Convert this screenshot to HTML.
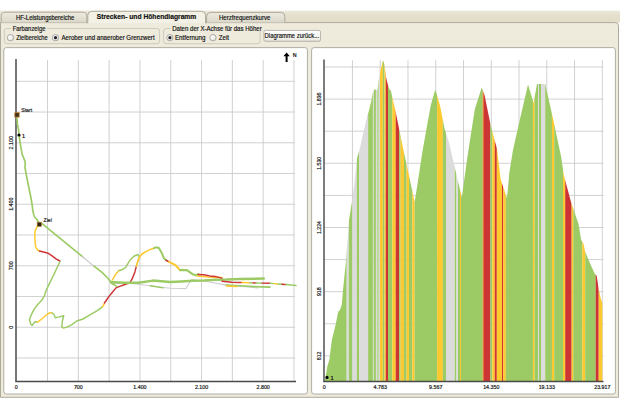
<!DOCTYPE html>
<html><head><meta charset="utf-8"><title>Strecken- und Höhendiagramm</title>
<style>html,body{margin:0;padding:0;background:#ffffff;}body{width:620px;height:413px;overflow:hidden;}svg{display:block;}</style>
</head><body>
<svg width="620" height="413" viewBox="0 0 620 413">
<rect x="0" y="0" width="620" height="413" fill="#ffffff"/>
<linearGradient id="stripg" x1="0" y1="0" x2="0" y2="1"><stop offset="0" stop-color="#ece9dc"/><stop offset="0.3" stop-color="#e6e1cf"/><stop offset="1" stop-color="#e1dbc7"/></linearGradient><rect x="0" y="10.6" width="620" height="12" fill="url(#stripg)"/>
<path d="M0.5,22.6 H615.5 Q618.5,22.6 618.5,25.6 V397.3 H0.5 Z" fill="#eeebdd" stroke="#aeaa9b" stroke-width="1"/>
<defs><linearGradient id="tabg" x1="0" y1="0" x2="0" y2="1"><stop offset="0" stop-color="#eceae0"/><stop offset="1" stop-color="#dbd8c9"/></linearGradient><linearGradient id="btng" x1="0" y1="0" x2="0" y2="1"><stop offset="0" stop-color="#ffffff"/><stop offset="0.8" stop-color="#f0efe8"/><stop offset="1" stop-color="#dedbd0"/></linearGradient><radialGradient id="radg" cx="0.35" cy="0.35" r="0.8"><stop offset="0" stop-color="#ffffff"/><stop offset="1" stop-color="#dcdcd4"/></radialGradient></defs>
<path d="M1.2,22.6 V16.2 Q1.2,12.2 5.2,12.2 H82.8 Q86.8,12.2 86.8,16.2 V22.6" fill="url(#tabg)" stroke="#aeaa9b" stroke-width="1"/>
<path d="M206.6,22.6 V16.4 Q206.6,12.4 210.6,12.4 H280.8 Q284.8,12.4 284.8,16.4 V22.6" fill="url(#tabg)" stroke="#aeaa9b" stroke-width="1"/>
<path d="M87.8,23.3 V15.3 Q87.8,11.3 91.8,11.3 H201.6 Q205.6,11.3 205.6,15.3 V23.3" fill="#f3f1e6" stroke="#aeaa9b" stroke-width="1"/>
<rect x="88.4" y="22" width="116.6" height="1.4" fill="#f3f1e6"/>
<text x="15.9" y="19.8" font-size="6.7" font-family="Liberation Sans, sans-serif" fill="#111" stroke="#111" stroke-width="0.17" textLength="58.5" lengthAdjust="spacingAndGlyphs">HF-Leistungsbereiche</text>
<text x="96.8" y="18.8" font-size="6.3" font-weight="bold" font-family="Liberation Sans, sans-serif" fill="#111" stroke="#111" stroke-width="0.17" textLength="99.5" lengthAdjust="spacingAndGlyphs">Strecken- und Höhendiagramm</text>
<text x="218.9" y="19.8" font-size="6.7" font-family="Liberation Sans, sans-serif" fill="#111" stroke="#111" stroke-width="0.17" textLength="51.5" lengthAdjust="spacingAndGlyphs">Herzfrequenzkurve</text>
<rect x="4.3" y="28.5" width="155.3" height="15.2" rx="2.5" fill="none" stroke="#cdcbbb" stroke-width="1"/>
<rect x="11" y="26" width="36" height="5" fill="#eeebdd"/>
<text x="12.7" y="30.9" font-size="6.7" font-family="Liberation Sans, sans-serif" fill="#111" stroke="#111" stroke-width="0.17" textLength="32.8" lengthAdjust="spacingAndGlyphs">Farbanzeige</text>
<rect x="163.6" y="28.5" width="96.5" height="15.2" rx="2.5" fill="none" stroke="#cdcbbb" stroke-width="1"/>
<rect x="170.5" y="26" width="93" height="5" fill="#eeebdd"/>
<text x="172.2" y="30.9" font-size="6.7" font-family="Liberation Sans, sans-serif" fill="#111" stroke="#111" stroke-width="0.17" textLength="89.5" lengthAdjust="spacingAndGlyphs">Daten der X-Achse für das Höher</text>
<circle cx="10.5" cy="37.7" r="3.2" fill="url(#radg)" stroke="#9a9a94" stroke-width="0.8"/>
<circle cx="55.5" cy="37.7" r="3.2" fill="url(#radg)" stroke="#9a9a94" stroke-width="0.8"/><circle cx="55.5" cy="37.7" r="1.6" fill="#222230"/>
<circle cx="169.9" cy="37.7" r="3.2" fill="url(#radg)" stroke="#9a9a94" stroke-width="0.8"/><circle cx="169.9" cy="37.7" r="1.6" fill="#222230"/>
<circle cx="213" cy="37.7" r="3.2" fill="url(#radg)" stroke="#9a9a94" stroke-width="0.8"/>
<text x="16.3" y="39.6" font-size="6.7" font-family="Liberation Sans, sans-serif" fill="#111" stroke="#111" stroke-width="0.17" textLength="31.5" lengthAdjust="spacingAndGlyphs">Zielbereiche</text>
<text x="61.4" y="39.6" font-size="6.7" font-family="Liberation Sans, sans-serif" fill="#111" stroke="#111" stroke-width="0.17" textLength="93.2" lengthAdjust="spacingAndGlyphs">Aerober und anaerober Grenzwert</text>
<text x="174.9" y="39.6" font-size="6.7" font-family="Liberation Sans, sans-serif" fill="#111" stroke="#111" stroke-width="0.17" textLength="30.6" lengthAdjust="spacingAndGlyphs">Entfernung</text>
<text x="218.8" y="39.6" font-size="6.7" font-family="Liberation Sans, sans-serif" fill="#111" stroke="#111" stroke-width="0.17" textLength="10.2" lengthAdjust="spacingAndGlyphs">Zeit</text>
<rect x="263.9" y="30.4" width="56.6" height="10.9" rx="1.6" fill="url(#btng)" stroke="#a9a8a0" stroke-width="0.8"/>
<text x="264.6" y="37.9" font-size="6.7" font-family="Liberation Sans, sans-serif" fill="#111" stroke="#111" stroke-width="0.17" textLength="54.5" lengthAdjust="spacingAndGlyphs">Diagramme zurück...</text>
<rect x="3.8" y="47.6" width="303.6" height="346.4" rx="2.5" fill="#fff" stroke="#a7a69d" stroke-width="0.9"/>
<rect x="311.6" y="47.6" width="303.8" height="346.4" rx="2.5" fill="#fff" stroke="#a7a69d" stroke-width="0.9"/>
<line x1="47.51" y1="60" x2="47.51" y2="381.5" stroke="#c9c9c9" stroke-width="0.85"/>
<line x1="78.32" y1="60" x2="78.32" y2="381.5" stroke="#c9c9c9" stroke-width="0.85"/>
<line x1="109.13" y1="60" x2="109.13" y2="381.5" stroke="#c9c9c9" stroke-width="0.85"/>
<line x1="139.94" y1="60" x2="139.94" y2="381.5" stroke="#c9c9c9" stroke-width="0.85"/>
<line x1="170.75" y1="60" x2="170.75" y2="381.5" stroke="#c9c9c9" stroke-width="0.85"/>
<line x1="201.56" y1="60" x2="201.56" y2="381.5" stroke="#c9c9c9" stroke-width="0.85"/>
<line x1="232.37" y1="60" x2="232.37" y2="381.5" stroke="#c9c9c9" stroke-width="0.85"/>
<line x1="263.18" y1="60" x2="263.18" y2="381.5" stroke="#c9c9c9" stroke-width="0.85"/>
<line x1="293.99" y1="60" x2="293.99" y2="381.5" stroke="#c9c9c9" stroke-width="0.85"/>
<line x1="16.0" y1="81.30" x2="295.0" y2="81.30" stroke="#c9c9c9" stroke-width="0.85"/>
<line x1="16.0" y1="112.04" x2="295.0" y2="112.04" stroke="#c9c9c9" stroke-width="0.85"/>
<line x1="16.0" y1="142.78" x2="295.0" y2="142.78" stroke="#c9c9c9" stroke-width="0.85"/>
<line x1="16.0" y1="173.52" x2="295.0" y2="173.52" stroke="#c9c9c9" stroke-width="0.85"/>
<line x1="16.0" y1="204.26" x2="295.0" y2="204.26" stroke="#c9c9c9" stroke-width="0.85"/>
<line x1="16.0" y1="235.00" x2="295.0" y2="235.00" stroke="#c9c9c9" stroke-width="0.85"/>
<line x1="16.0" y1="265.74" x2="295.0" y2="265.74" stroke="#c9c9c9" stroke-width="0.85"/>
<line x1="16.0" y1="296.48" x2="295.0" y2="296.48" stroke="#c9c9c9" stroke-width="0.85"/>
<line x1="16.0" y1="327.22" x2="295.0" y2="327.22" stroke="#c9c9c9" stroke-width="0.85"/>
<line x1="16.0" y1="357.96" x2="295.0" y2="357.96" stroke="#c9c9c9" stroke-width="0.85"/>
<line x1="16.0" y1="59.0" x2="16.0" y2="381.5" stroke="#4a4a4a" stroke-width="1.5"/>
<line x1="15.3" y1="381.5" x2="296.0" y2="381.5" stroke="#4a4a4a" stroke-width="1.5"/>
<text x="16.20" y="389.0" font-size="5.3" text-anchor="middle" font-family="Liberation Sans, sans-serif" fill="#222" stroke="#222" stroke-width="0.2">0</text>
<text x="78.32" y="389.0" font-size="5.3" text-anchor="middle" font-family="Liberation Sans, sans-serif" fill="#222" stroke="#222" stroke-width="0.2">700</text>
<text x="139.94" y="389.0" font-size="5.3" text-anchor="middle" font-family="Liberation Sans, sans-serif" fill="#222" stroke="#222" stroke-width="0.2">1.400</text>
<text x="201.56" y="389.0" font-size="5.3" text-anchor="middle" font-family="Liberation Sans, sans-serif" fill="#222" stroke="#222" stroke-width="0.2">2.100</text>
<text x="263.18" y="389.0" font-size="5.3" text-anchor="middle" font-family="Liberation Sans, sans-serif" fill="#222" stroke="#222" stroke-width="0.2">2.800</text>
<text transform="translate(12.6,327.20) rotate(-90)" x="0" y="0" font-size="5.3" text-anchor="middle" font-family="Liberation Sans, sans-serif" fill="#222" stroke="#222" stroke-width="0.2">0</text>
<text transform="translate(12.6,265.72) rotate(-90)" x="0" y="0" font-size="5.3" text-anchor="middle" font-family="Liberation Sans, sans-serif" fill="#222" stroke="#222" stroke-width="0.2">700</text>
<text transform="translate(12.6,204.24) rotate(-90)" x="0" y="0" font-size="5.3" text-anchor="middle" font-family="Liberation Sans, sans-serif" fill="#222" stroke="#222" stroke-width="0.2">1.400</text>
<text transform="translate(12.6,142.76) rotate(-90)" x="0" y="0" font-size="5.3" text-anchor="middle" font-family="Liberation Sans, sans-serif" fill="#222" stroke="#222" stroke-width="0.2">2.100</text>
<polyline points="17,118 17.4,123.9 18.5,129.7 19.2,135.5 19.9,141.3 21.1,148.6 22.2,154.4 24,158.8 25.2,162 25,167.5 26.3,175 27.5,181 28.8,187.5 30.2,194 31.3,200 32.3,206 32.7,210 33.8,215 35,217.5 37,219.5 39.3,224" fill="none" stroke="#9ccb65" stroke-width="1.68" stroke-linejoin="round" stroke-linecap="round"/>
<polyline points="39,224 42.4,223.9 63.8,241.3 82.5,256.6" fill="none" stroke="#9ccb65" stroke-width="1.68" stroke-linejoin="round" stroke-linecap="round"/>
<polyline points="82.5,256.6 85,258.8 94,266.2" fill="none" stroke="#d0d0d0" stroke-width="1.46" stroke-linejoin="round" stroke-linecap="round"/>
<polyline points="94,266.2 95,266.9 102.3,272.7 108.1,278.5 111,282.1 113.9,284.3" fill="none" stroke="#9ccb65" stroke-width="1.68" stroke-linejoin="round" stroke-linecap="round"/>
<polyline points="39,224 37.6,225.8 35.1,230.7 34.7,235.5 35.1,241.3 35.7,247.1 37.6,250 39.5,251" fill="none" stroke="#fec92f" stroke-width="1.46" stroke-linejoin="round" stroke-linecap="round"/>
<polyline points="39.5,251 43.4,252 48.3,253.3 52.1,255.9 56,258.8 59.9,261" fill="none" stroke="#cd3434" stroke-width="1.46" stroke-linejoin="round" stroke-linecap="round"/>
<polyline points="59.9,261.7 54,274.3 48.3,285.9 46.3,290 44.4,295.8 41.8,300.3 37.9,304.2 34,309.4 30.8,315.8 29.5,319.7 30.8,324.2 32.1,325.5 34,322.9 35.3,321.6 37.3,322.3" fill="none" stroke="#9ccb65" stroke-width="1.46" stroke-linejoin="round" stroke-linecap="round"/>
<polyline points="37.3,322.3 41.8,319 46.9,314.5 50.2,312.6 52.1,313" fill="none" stroke="#fec92f" stroke-width="1.46" stroke-linejoin="round" stroke-linecap="round"/>
<polyline points="52.1,313 54,314.5 55.3,317.7 58.5,317.1 63.7,315.8 62.4,321 61.8,326.8 63.1,328.1 66.3,327.4 71.5,324.8 76.6,321 83.1,319 89.5,315.2 97.3,310.6 102.4,306.8" fill="none" stroke="#9ccb65" stroke-width="1.46" stroke-linejoin="round" stroke-linecap="round"/>
<polyline points="102.4,306.8 104.4,303.5" fill="none" stroke="#fec92f" stroke-width="1.46" stroke-linejoin="round" stroke-linecap="round"/>
<polyline points="104.4,303 106.6,300 108.8,296.6 112.4,292.2 116,287.9 119.7,286.4 125.5,284.3 129.8,282.8 132,279.2 134.9,271.9 136.4,266.1" fill="none" stroke="#cd3434" stroke-width="1.46" stroke-linejoin="round" stroke-linecap="round"/>
<polyline points="113.9,283.5 131.3,283.5 150.2,285.7 170,288.3 185.8,288.6 191.4,279.8 203.9,281 225.3,284.9 258,288" fill="none" stroke="#cfcfd4" stroke-width="1.12" stroke-linejoin="round" stroke-linecap="round"/>
<polyline points="111,282.1 124,282.8 138.5,282.8 153,280.6 170,282.1 181.3,281.5 192.6,280.7 203.9,280.4 215.1,279.8 226.4,279.6 240,278.9 263.8,278.6" fill="none" stroke="#9ccb65" stroke-width="2.46" stroke-linejoin="round" stroke-linecap="round"/>
<polyline points="111,283 116.8,286.4" fill="none" stroke="#9ccb65" stroke-width="1.68" stroke-linejoin="round" stroke-linecap="round"/>
<polyline points="150.2,285.7 163.2,287.9" fill="none" stroke="#9ccb65" stroke-width="1.46" stroke-linejoin="round" stroke-linecap="round"/>
<polyline points="112.4,279.9 115.3,274.8 119,270.5" fill="none" stroke="#fec92f" stroke-width="1.46" stroke-linejoin="round" stroke-linecap="round"/>
<polyline points="119,270.5 121.9,269.8 125.5,267.6 129.8,260.3 134.2,256 137.8,254.5 139.3,256.7 137.8,261.8 136.4,266.1" fill="none" stroke="#9ccb65" stroke-width="1.46" stroke-linejoin="round" stroke-linecap="round"/>
<polyline points="136.4,266.1 138.5,258.9 141.4,254.5 145.8,251.6 150.2,249.4 154,248.2" fill="none" stroke="#fec92f" stroke-width="1.57" stroke-linejoin="round" stroke-linecap="round"/>
<polyline points="154,248.2 156,247.3 158.9,248 161.8,253.1 163.9,258.1 166.1,260.3" fill="none" stroke="#9ccb65" stroke-width="2.02" stroke-linejoin="round" stroke-linecap="round"/>
<polyline points="166.1,260.3 169,261.8" fill="none" stroke="#cd3434" stroke-width="1.68" stroke-linejoin="round" stroke-linecap="round"/>
<polyline points="169,261.8 175.6,265.2 180.2,270.2" fill="none" stroke="#fec92f" stroke-width="2.02" stroke-linejoin="round" stroke-linecap="round"/>
<polyline points="180.2,270.2 186.9,270.2 192.6,274.2 196,275.3 198.2,274.2" fill="none" stroke="#9ccb65" stroke-width="2.24" stroke-linejoin="round" stroke-linecap="round"/>
<polyline points="197,275.9 209.5,276.9 221.9,277.6" fill="none" stroke="#fec92f" stroke-width="1.46" stroke-linejoin="round" stroke-linecap="round"/>
<polyline points="198.2,274.4 203.9,274.8 209.5,275.9 215.1,276.4 219.7,277.6 221.9,278.1" fill="none" stroke="#cd3434" stroke-width="1.46" stroke-linejoin="round" stroke-linecap="round"/>
<polyline points="222,281.2 232,282.3 240,282.5 242,282.55882352941177" fill="none" stroke="#cd3434" stroke-width="1.46" stroke-linejoin="round" stroke-linecap="round"/>
<polyline points="242,282.55882352941177 250,282.79411764705884" fill="none" stroke="#fec92f" stroke-width="1.46" stroke-linejoin="round" stroke-linecap="round"/>
<polyline points="250,282.79411764705884 253,282.88235294117646" fill="none" stroke="#9ccb65" stroke-width="1.46" stroke-linejoin="round" stroke-linecap="round"/>
<polyline points="253,282.88235294117646 256,282.97058823529414" fill="none" stroke="#cd3434" stroke-width="1.46" stroke-linejoin="round" stroke-linecap="round"/>
<polyline points="256,282.97058823529414 257,283.0 262,283.11538461538464" fill="none" stroke="#9ccb65" stroke-width="1.46" stroke-linejoin="round" stroke-linecap="round"/>
<polyline points="262,283.11538461538464 270,283.3" fill="none" stroke="#cd3434" stroke-width="1.46" stroke-linejoin="round" stroke-linecap="round"/>
<polyline points="270,283.3 274,283.62" fill="none" stroke="#9ccb65" stroke-width="1.46" stroke-linejoin="round" stroke-linecap="round"/>
<polyline points="274,283.62 278,283.94" fill="none" stroke="#fec92f" stroke-width="1.46" stroke-linejoin="round" stroke-linecap="round"/>
<polyline points="278,283.94 282,284.26" fill="none" stroke="#9ccb65" stroke-width="1.46" stroke-linejoin="round" stroke-linecap="round"/>
<polyline points="282,284.26 285,284.5 286,284.6" fill="none" stroke="#cd3434" stroke-width="1.46" stroke-linejoin="round" stroke-linecap="round"/>
<polyline points="286,284.6 296,285.6" fill="none" stroke="#9ccb65" stroke-width="1.46" stroke-linejoin="round" stroke-linecap="round"/>
<polyline points="226,285.1 240,285.8 255,286.6 270,287.1" fill="none" stroke="#9ccb65" stroke-width="1.57" stroke-linejoin="round" stroke-linecap="round"/>
<polyline points="226.4,286.0 237,286.5" fill="none" stroke="#fec92f" stroke-width="1.46" stroke-linejoin="round" stroke-linecap="round"/>
<rect x="14.8" y="112.7" width="4.4" height="4.4" fill="#3a3020" stroke="#c9822a" stroke-width="0.8"/>
<rect x="37.2" y="222.2" width="4.2" height="4.2" fill="#2a2418" stroke="#b8802a" stroke-width="0.7"/>
<circle cx="19" cy="135" r="1.6" fill="#000"/>
<text x="21.2" y="112.3" font-size="5.8" font-family="Liberation Sans, sans-serif" fill="#111" stroke="#111" stroke-width="0.18" textLength="11" lengthAdjust="spacingAndGlyphs">Start</text>
<text x="43.6" y="222" font-size="6.2" font-family="Liberation Sans, sans-serif" fill="#111" stroke="#111" stroke-width="0.18" textLength="8.2" lengthAdjust="spacingAndGlyphs">Ziel</text>
<text x="22.1" y="137.8" font-size="5.6" font-family="Liberation Sans, sans-serif" fill="#111" stroke="#111" stroke-width="0.2">1</text>
<path d="M286.6,52.4 L289.8,56.2 H287.6 V62 H285.6 V56.2 H283.4 Z" fill="#000"/>
<text x="292.8" y="57" font-size="5.4" font-weight="bold" font-family="Liberation Sans, sans-serif" fill="#111">N</text>
<line x1="352.46" y1="60.3" x2="352.46" y2="381.5" stroke="#c9c9c9" stroke-width="0.85"/>
<line x1="380.22" y1="60.3" x2="380.22" y2="381.5" stroke="#c9c9c9" stroke-width="0.85"/>
<line x1="407.98" y1="60.3" x2="407.98" y2="381.5" stroke="#c9c9c9" stroke-width="0.85"/>
<line x1="435.74" y1="60.3" x2="435.74" y2="381.5" stroke="#c9c9c9" stroke-width="0.85"/>
<line x1="463.50" y1="60.3" x2="463.50" y2="381.5" stroke="#c9c9c9" stroke-width="0.85"/>
<line x1="491.26" y1="60.3" x2="491.26" y2="381.5" stroke="#c9c9c9" stroke-width="0.85"/>
<line x1="519.02" y1="60.3" x2="519.02" y2="381.5" stroke="#c9c9c9" stroke-width="0.85"/>
<line x1="546.78" y1="60.3" x2="546.78" y2="381.5" stroke="#c9c9c9" stroke-width="0.85"/>
<line x1="574.54" y1="60.3" x2="574.54" y2="381.5" stroke="#c9c9c9" stroke-width="0.85"/>
<line x1="602.30" y1="60.3" x2="602.30" y2="381.5" stroke="#c9c9c9" stroke-width="0.85"/>
<line x1="324.0" y1="67.00" x2="603.5" y2="67.00" stroke="#c9c9c9" stroke-width="0.85"/>
<line x1="324.0" y1="99.10" x2="603.5" y2="99.10" stroke="#c9c9c9" stroke-width="0.85"/>
<line x1="324.0" y1="131.20" x2="603.5" y2="131.20" stroke="#c9c9c9" stroke-width="0.85"/>
<line x1="324.0" y1="163.30" x2="603.5" y2="163.30" stroke="#c9c9c9" stroke-width="0.85"/>
<line x1="324.0" y1="195.40" x2="603.5" y2="195.40" stroke="#c9c9c9" stroke-width="0.85"/>
<line x1="324.0" y1="227.50" x2="603.5" y2="227.50" stroke="#c9c9c9" stroke-width="0.85"/>
<line x1="324.0" y1="259.60" x2="603.5" y2="259.60" stroke="#c9c9c9" stroke-width="0.85"/>
<line x1="324.0" y1="291.70" x2="603.5" y2="291.70" stroke="#c9c9c9" stroke-width="0.85"/>
<line x1="324.0" y1="323.80" x2="603.5" y2="323.80" stroke="#c9c9c9" stroke-width="0.85"/>
<line x1="324.0" y1="355.90" x2="603.5" y2="355.90" stroke="#c9c9c9" stroke-width="0.85"/>
<clipPath id="profclip"><path d="M324.6,381.5 L325.3,378.6 L327.3,366.6 L329.4,359.4 L331.8,340 L335.8,324 L338.2,311.8 L340,310 L341.8,304.5 L343,290 L346.2,258.8 L349,220 L351.9,202.3 L352.9,195.3 L354.8,180 L357,158 L359.5,150 L361.6,140 L367.5,114.8 L368.6,112 L371,102.3 L372.9,92.6 L374.4,89.2 L375.8,89.7 L377.5,89.8 L378.7,80 L380.7,69.5 L383,60.3 L384,62.7 L385,68.5 L386,77.3 L387.9,84.8 L389.4,89.2 L390.8,90.6 L392.3,97 L393.7,103.2 L395.7,112 L398.6,126.3 L403,148 L414.7,202 L422.7,150 L426.1,130.9 L430.7,105.6 L435.3,89.5 L440,105.6 L444.5,128.6 L449,142.4 L461.8,197.5 L467.4,157 L474.8,109.3 L481.7,87.6 L484.7,95.7 L490.9,126.6 L497,148.8 L500.7,179.6 L505.7,194.4 L507,198 L509.4,172 L513,150 L520.5,116.7 L528,84.6 L533.6,103 L537,84 L545.2,84 L552.6,116.7 L561.2,157 L563.7,174.7 L571,201.9 L578.5,224 L581.2,240 L583.5,243.8 L585.1,251.6 L590,263.2 L594.8,273.8 L596.7,275.8 L598.6,288.4 L600.6,298 L602.5,303.8 L602.5,381.5 Z"/></clipPath>
<g clip-path="url(#profclip)">
<rect x="324" y="55" width="22.75" height="330" fill="#9ccb65"/>
<rect x="346.7" y="55" width="2.15" height="330" fill="#dcdcdc"/>
<rect x="348.8" y="55" width="3.55" height="330" fill="#9ccb65"/>
<rect x="352.3" y="55" width="4.55" height="330" fill="#dcdcdc"/>
<rect x="356.8" y="55" width="2.35" height="330" fill="#9ccb65"/>
<rect x="359.1" y="55" width="9.05" height="330" fill="#dcdcdc"/>
<rect x="368.1" y="55" width="4.85" height="330" fill="#9ccb65"/>
<rect x="372.9" y="55" width="0.95" height="330" fill="#dcdcdc"/>
<rect x="373.8" y="55" width="2.15" height="330" fill="#9ccb65"/>
<rect x="375.9" y="55" width="1.55" height="330" fill="#dcdcdc"/>
<rect x="377.4" y="55" width="1.35" height="330" fill="#9ccb65"/>
<rect x="378.7" y="55" width="1.35" height="330" fill="#dcdcdc"/>
<rect x="380" y="55" width="2.85" height="330" fill="#fec92f"/>
<rect x="382.8" y="55" width="1.75" height="330" fill="#9ccb65"/>
<rect x="384.5" y="55" width="1.35" height="330" fill="#fec92f"/>
<rect x="385.8" y="55" width="2.25" height="330" fill="#cd3434"/>
<rect x="388" y="55" width="4.35" height="330" fill="#9ccb65"/>
<rect x="392.3" y="55" width="3.45" height="330" fill="#fec92f"/>
<rect x="395.7" y="55" width="3.45" height="330" fill="#cd3434"/>
<rect x="399.1" y="55" width="1.55" height="330" fill="#9ccb65"/>
<rect x="400.6" y="55" width="3.35" height="330" fill="#fec92f"/>
<rect x="403.9" y="55" width="2.65" height="330" fill="#9ccb65"/>
<rect x="406.5" y="55" width="2.55" height="330" fill="#fec92f"/>
<rect x="409" y="55" width="3.35" height="330" fill="#9ccb65"/>
<rect x="412.3" y="55" width="2.35" height="330" fill="#fec92f"/>
<rect x="414.6" y="55" width="22.55" height="330" fill="#9ccb65"/>
<rect x="437.1" y="55" width="5.75" height="330" fill="#fec92f"/>
<rect x="442.8" y="55" width="3.25" height="330" fill="#9ccb65"/>
<rect x="446" y="55" width="8.85" height="330" fill="#dcdcdc"/>
<rect x="454.8" y="55" width="1.65" height="330" fill="#9ccb65"/>
<rect x="456.4" y="55" width="1.65" height="330" fill="#dcdcdc"/>
<rect x="458" y="55" width="2.05" height="330" fill="#9ccb65"/>
<rect x="460" y="55" width="1.05" height="330" fill="#fec92f"/>
<rect x="461" y="55" width="21.65" height="330" fill="#9ccb65"/>
<rect x="482.6" y="55" width="1.35" height="330" fill="#e0782e"/>
<rect x="483.9" y="55" width="6.45" height="330" fill="#cd3434"/>
<rect x="490.3" y="55" width="2.05" height="330" fill="#9ccb65"/>
<rect x="492.3" y="55" width="2.55" height="330" fill="#fec92f"/>
<rect x="494.8" y="55" width="2.05" height="330" fill="#cd3434"/>
<rect x="496.8" y="55" width="5.25" height="330" fill="#fec92f"/>
<rect x="502" y="55" width="1.25" height="330" fill="#cd3434"/>
<rect x="503.2" y="55" width="2.65" height="330" fill="#fec92f"/>
<rect x="505.8" y="55" width="27.15" height="330" fill="#9ccb65"/>
<rect x="532.9" y="55" width="1.75" height="330" fill="#fec92f"/>
<rect x="534.6" y="55" width="3.45" height="330" fill="#9ccb65"/>
<rect x="538" y="55" width="1.05" height="330" fill="#dcdcdc"/>
<rect x="539" y="55" width="2.05" height="330" fill="#9ccb65"/>
<rect x="541" y="55" width="4.25" height="330" fill="#dcdcdc"/>
<rect x="545.2" y="55" width="6.75" height="330" fill="#9ccb65"/>
<rect x="551.9" y="55" width="2.35" height="330" fill="#fec92f"/>
<rect x="554.2" y="55" width="8.85" height="330" fill="#9ccb65"/>
<rect x="563" y="55" width="2.25" height="330" fill="#fec92f"/>
<rect x="565.2" y="55" width="6.45" height="330" fill="#cd3434"/>
<rect x="571.6" y="55" width="1.75" height="330" fill="#fec92f"/>
<rect x="573.3" y="55" width="9.05" height="330" fill="#9ccb65"/>
<rect x="582.3" y="55" width="2.95" height="330" fill="#fec92f"/>
<rect x="585.2" y="55" width="10.55" height="330" fill="#9ccb65"/>
<rect x="595.7" y="55" width="3.05" height="330" fill="#cd3434"/>
<rect x="598.7" y="55" width="3.95" height="330" fill="#fec92f"/>
</g>
<line x1="324.0" y1="59.5" x2="324.0" y2="381.5" stroke="#505050" stroke-width="1.5"/>
<line x1="323.2" y1="381.5" x2="603.5" y2="381.5" stroke="#4a4a4a" stroke-width="1.5"/>
<text x="324.20" y="389.0" font-size="5.3" text-anchor="middle" font-family="Liberation Sans, sans-serif" fill="#222" stroke="#222" stroke-width="0.2">0</text>
<text x="380.22" y="389.0" font-size="5.3" text-anchor="middle" font-family="Liberation Sans, sans-serif" fill="#222" stroke="#222" stroke-width="0.2">4.783</text>
<text x="435.74" y="389.0" font-size="5.3" text-anchor="middle" font-family="Liberation Sans, sans-serif" fill="#222" stroke="#222" stroke-width="0.2">9.567</text>
<text x="491.26" y="389.0" font-size="5.3" text-anchor="middle" font-family="Liberation Sans, sans-serif" fill="#222" stroke="#222" stroke-width="0.2">14.350</text>
<text x="546.78" y="389.0" font-size="5.3" text-anchor="middle" font-family="Liberation Sans, sans-serif" fill="#222" stroke="#222" stroke-width="0.2">19.133</text>
<text x="602.30" y="389.0" font-size="5.3" text-anchor="middle" font-family="Liberation Sans, sans-serif" fill="#222" stroke="#222" stroke-width="0.2">23.917</text>
<text transform="translate(320.9,355.90) rotate(-90)" x="0" y="0" font-size="5.2" text-anchor="middle" font-family="Liberation Sans, sans-serif" fill="#222" stroke="#222" stroke-width="0.2">612</text>
<text transform="translate(320.9,291.70) rotate(-90)" x="0" y="0" font-size="5.2" text-anchor="middle" font-family="Liberation Sans, sans-serif" fill="#222" stroke="#222" stroke-width="0.2">918</text>
<text transform="translate(320.9,227.50) rotate(-90)" x="0" y="0" font-size="5.2" text-anchor="middle" font-family="Liberation Sans, sans-serif" fill="#222" stroke="#222" stroke-width="0.2">1.224</text>
<text transform="translate(320.9,163.30) rotate(-90)" x="0" y="0" font-size="5.2" text-anchor="middle" font-family="Liberation Sans, sans-serif" fill="#222" stroke="#222" stroke-width="0.2">1.530</text>
<text transform="translate(320.9,99.10) rotate(-90)" x="0" y="0" font-size="5.2" text-anchor="middle" font-family="Liberation Sans, sans-serif" fill="#222" stroke="#222" stroke-width="0.2">1.836</text>
<circle cx="327" cy="377.4" r="1.6" fill="#000"/>
<text x="330.4" y="379.8" font-size="5.6" font-family="Liberation Sans, sans-serif" fill="#111" stroke="#111" stroke-width="0.2">1</text>
</svg>
</body></html>
